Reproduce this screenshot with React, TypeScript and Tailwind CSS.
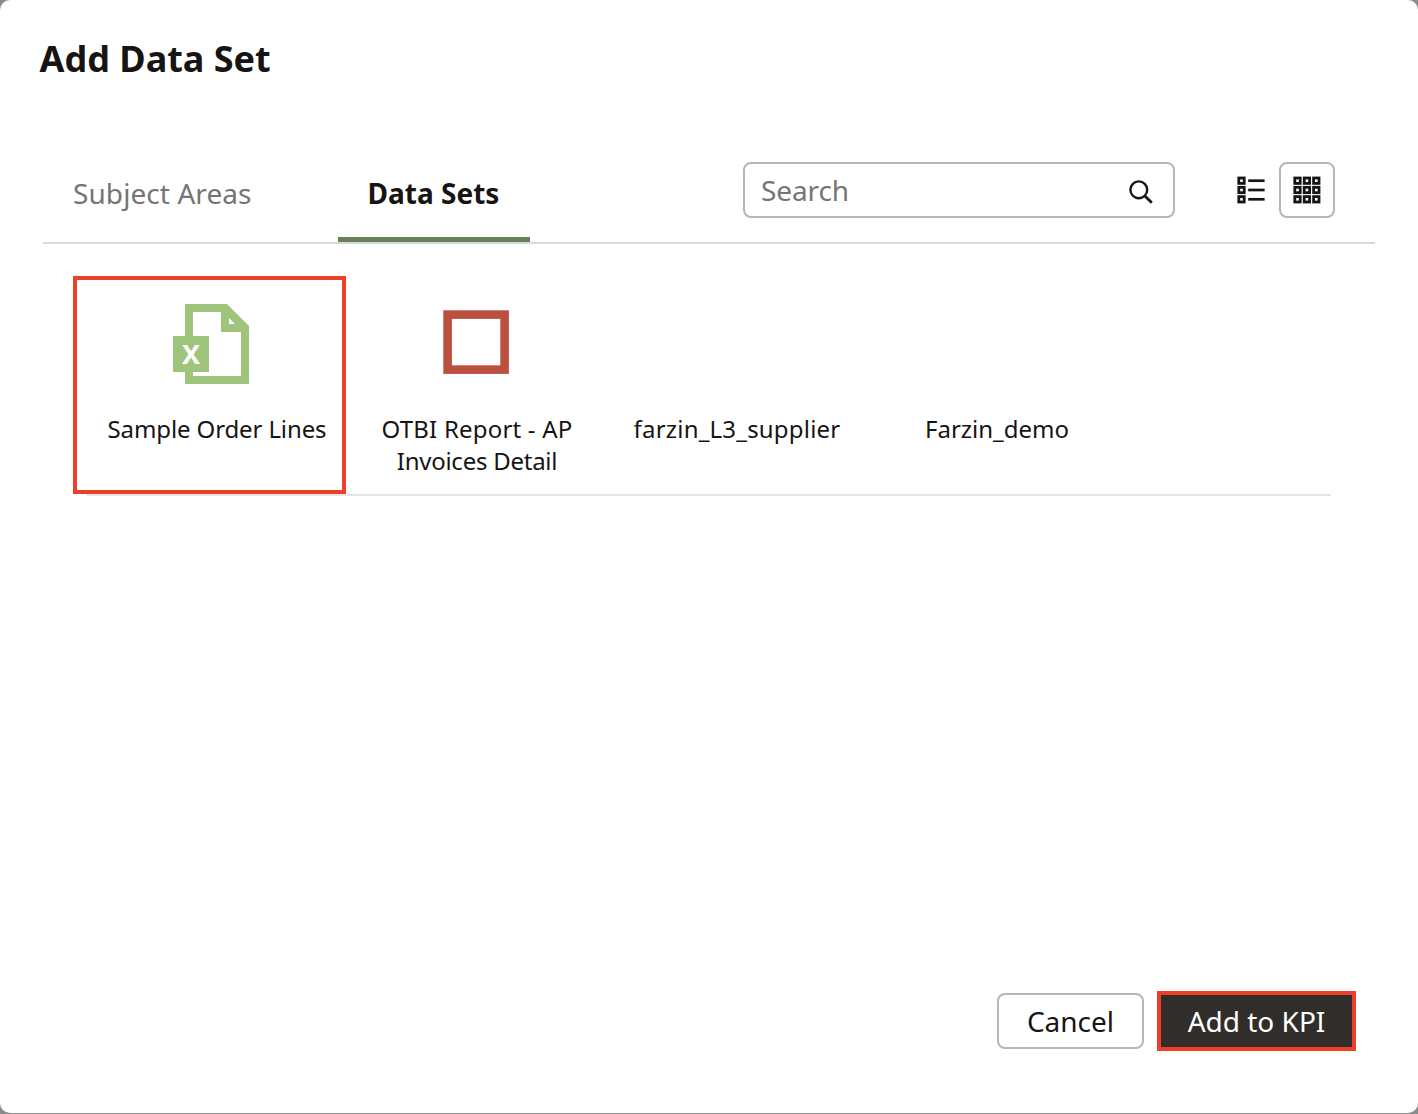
import type { ReactNode } from 'react';

function SearchIcon() {
  return (
    <svg className="mt-[3px] h-6 w-6" viewBox="0 0 24 24" fill="none" stroke="#161513" strokeWidth="2.4">
      <circle cx="9.8" cy="9.8" r="8.4" />
      <path d="M15.4 15.4 22.8 22.8" strokeWidth="2.8" />
    </svg>
  );
}

function ListIcon() {
  return (
    <svg className="h-7 w-7" viewBox="0 0 28 28" fill="none" stroke="#161513">
      {[4.7, 14, 23.3].map((y) => (
        <g key={y}>
          <rect x="1.8" y={y - 2.7} width="5.4" height="5.4" strokeWidth="2.8" />
          <path d={`M11.2 ${y} H27.6`} strokeWidth="2.7" />
        </g>
      ))}
    </svg>
  );
}

function GridIcon() {
  return (
    <svg className="h-7 w-7" viewBox="0 0 28 28" fill="none" stroke="#161513" strokeWidth="2.8">
      {[2, 11.3, 20.6].map((y) =>
        [1.8, 11.2, 20.6].map((x) => <rect key={`${x}-${y}`} x={x} y={y} width="5.4" height="5.4" />)
      )}
    </svg>
  );
}

function SpreadsheetIcon() {
  return (
    <svg className="h-20 w-[76px]" viewBox="0 0 76 80" fill="#9fc47c">
      <path
        fillRule="evenodd"
        d="M12 0H54L76 22V80H12V68H0V32H12ZM20 8V32H36V68H20V72H68V28H48V8ZM56 14V20H62Z"
      />
      <text x="18" y="60" textAnchor="middle" fill="#fff" className="font-['Noto_Sans'] text-[27px] font-bold">
        X
      </text>
    </svg>
  );
}

function ReportIcon() {
  return (
    <svg className="h-16 w-[66px]" viewBox="0 0 66 64" fill="none">
      <rect x="4.6" y="4.6" width="57" height="55" stroke="#bb503e" strokeWidth="8.6" />
    </svg>
  );
}

function DataSet({ icon, children }: { icon?: ReactNode; children: ReactNode }) {
  return (
    <li className="flex w-[260px] flex-col items-center text-center">
      <div className="flex h-[133px] w-full justify-center">{icon}</div>
      <span className="w-[224px] text-2xl leading-8">{children}</span>
    </li>
  );
}

export default function App() {
  return (
    <div className="h-[1114px] w-[1418px] overflow-hidden bg-[#8b8b8b] font-['Noto_Sans',sans-serif] text-[#161513]">
      <main className="flex h-[1113px] flex-col rounded-[10px] bg-white">
        <h1 className="pt-[34px] pl-[39.5px] text-[36px] leading-[50px] font-bold">Add Data Set</h1>

        <div className="mt-[78px] mr-[43px] ml-[43px] flex h-[82px] items-start border-b-2 border-[#d9d9d9]">
          <div className="flex h-full text-[28px]">
            <button className="flex h-full w-[238px] items-start pt-[11px] pl-[30px] leading-10 tracking-[0.08px] text-[#757575]">
              Subject Areas
            </button>
            <button className="ml-[57px] flex h-full w-[192px] items-start justify-center border-b-5 border-[#697f57] pt-[11px] pr-px leading-10 font-bold">
              Data Sets
            </button>
          </div>
          <label className="ml-[213px] flex h-14 w-[432px] items-center justify-between rounded-lg border-2 border-[#b6b6b6] pr-5 pl-4">
            <input
              className="w-[300px] text-[28px] leading-10 tracking-[-0.1px] outline-none placeholder:text-[#757575]"
              placeholder="Search"
            />
            <SearchIcon />
          </label>
          <div className="ml-[48px] flex">
            <button className="flex h-14 w-14 items-center justify-center">
              <ListIcon />
            </button>
            <button className="flex h-14 w-14 items-center justify-center rounded-lg border-2 border-[#b6b6b6]">
              <GridIcon />
            </button>
          </div>
        </div>

        <section className="relative mr-[87px] ml-[87px] h-[252px] border-b-2 border-[#e5e5e5]">
          <ul className="flex pt-9">
            <DataSet icon={<div className="mt-6 mr-3"><SpreadsheetIcon /></div>}>
              <span className="tracking-[-0.12px]">Sample Order Lines</span>
            </DataSet>
            <DataSet icon={<div className="mt-[30px] mr-0.5"><ReportIcon /></div>}>
              <span className="tracking-[0.2px]">OTBI Report - AP</span>{' '}
              <span className="tracking-[-0.25px]">Invoices Detail</span>
            </DataSet>
            <DataSet>
              <span className="tracking-[0.2px]">farzin_L3_supplier</span>
            </DataSet>
            <DataSet>Farzin_demo</DataSet>
          </ul>
          <div className="absolute top-8 -left-[14px] h-[218px] w-[273px] border-4 border-[#ee4028]" />
        </section>

        <footer className="mt-auto flex items-center justify-end gap-[13px] pr-[62px] pb-[62px]">
          <button className="h-14 w-[147px] rounded-lg border-2 border-[#b6b6b6] text-[28px] leading-10">Cancel</button>
          <button className="h-[60px] w-[199px] border-4 border-[#ee4028] bg-[#312d2a] text-[28px] leading-10 text-white">
            Add to KPI
          </button>
        </footer>
      </main>
    </div>
  );
}
